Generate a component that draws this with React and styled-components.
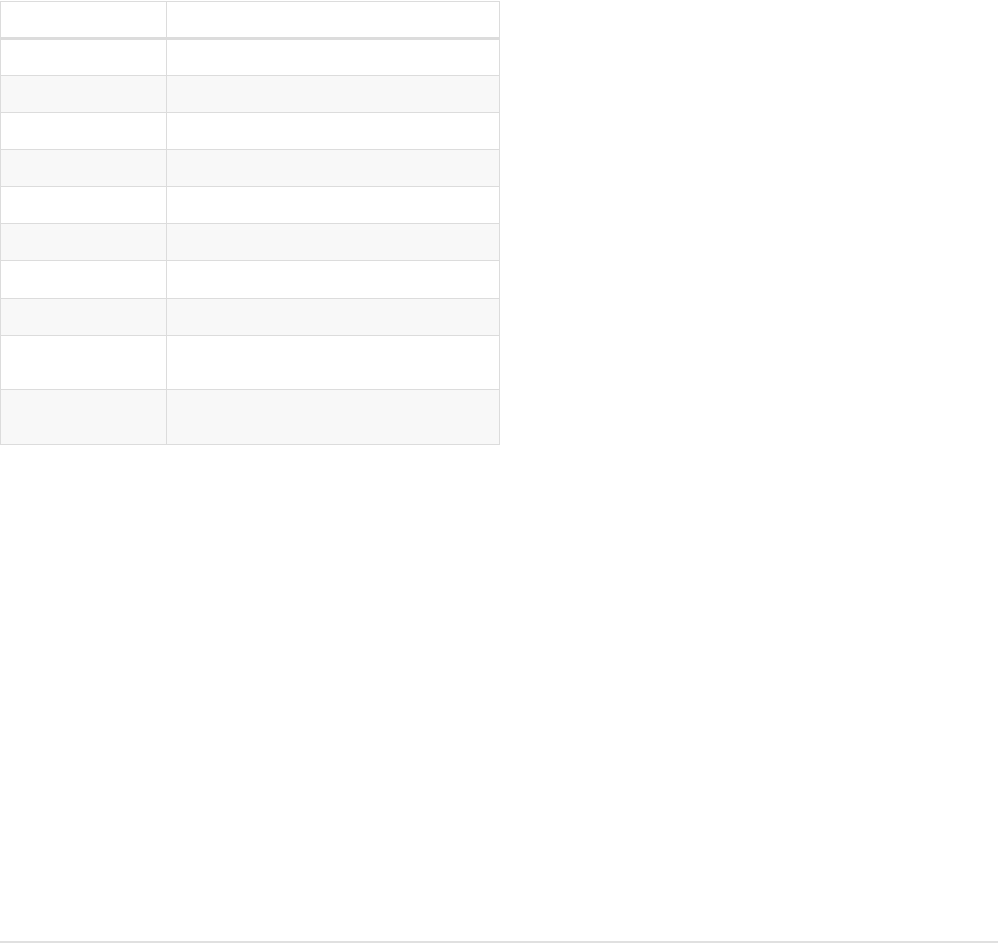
import styled, { createGlobalStyle } from "styled-components";

const GlobalStyle = createGlobalStyle`
  html, body {
    margin: 0;
    padding: 0;
    background: #ffffff;
    font-family: "Liberation Sans", Arial, sans-serif;
    font-size: 14px;
    color: #333;
  }
`;

const rows = [37, 37, 37, 37, 37, 37, 38, 37, 54, 55];

export default function App() {
  return (
    <>
      <GlobalStyle />
      <Page>
        <Table>
          <colgroup>
            <col style={{ width: 166 }} />
            <col />
          </colgroup>
          <thead>
            <tr>
              <HeadCell></HeadCell>
              <HeadCell></HeadCell>
            </tr>
          </thead>
          <tbody>
            {rows.map((h, i) => (
              <Row key={i} $striped={i % 2 === 1} style={{ height: h }}>
                <Cell></Cell>
                <Cell></Cell>
              </Row>
            ))}
          </tbody>
        </Table>
        <Footer />
      </Page>
    </>
  );
}

const Page = styled.div`
  min-height: 943px;
  display: flex;
  flex-direction: column;
  justify-content: space-between;
  box-sizing: border-box;
`;

const Table = styled.table`
  width: 500px;
  border-collapse: collapse;
  table-layout: fixed;
  margin-top: 1px;
`;

const HeadCell = styled.th`
  height: 37px;
  padding: 0 8px;
  border: 1px solid #dcdcdc;
  border-bottom: 3px solid #dcdcdc;
  box-sizing: border-box;
`;

const Row = styled.tr`
  background: ${(p) => (p.$striped ? "#f8f8f8" : "#ffffff")};
`;

const Cell = styled.td`
  padding: 0 8px;
  border: 1px solid #dcdcdc;
`;

const Footer = styled.div`
  height: 2px;
  background: #e0e0e0;
`;
